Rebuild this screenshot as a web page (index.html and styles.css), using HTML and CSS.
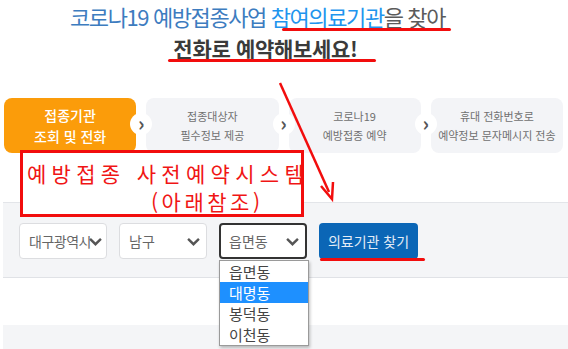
FILE: index.html
```html
<!DOCTYPE html>
<html lang="ko">
<head>
<meta charset="utf-8">
<link rel="stylesheet" href="styles.css">
</head>
<body>
<div class="page">
  <header class="intro">
    <p class="line1">코로나19 예방접종사업 <span class="hl">참여의료기관</span><span class="grey">을 찾아</span></p>
    <p class="line2">전화로 예약해보세요!</p>
  </header>

  <ol class="steps">
    <li class="step active"><span>접종기관</span><span>조회 및 전화</span></li>
    <li class="step"><span>접종대상자</span><span>필수정보 제공</span></li>
    <li class="step"><span>코로나19</span><span>예방접종 예약</span></li>
    <li class="step last"><span>휴대 전화번호로</span><span>예약정보 문자메시지 전송</span></li>
  </ol>

  <section class="filter">
    <div class="select"><span class="val">대구광역시</span><svg class="chev" viewBox="0 0 12 8"><path d="M1 1.5 L6 6.5 L11 1.5" /></svg></div>
    <div class="select"><span class="val">남구</span><svg class="chev" viewBox="0 0 12 8"><path d="M1 1.5 L6 6.5 L11 1.5" /></svg></div>
    <div class="select focus"><span class="val">읍면동</span><svg class="chev" viewBox="0 0 12 8"><path d="M1 1.5 L6 6.5 L11 1.5" /></svg>
      <ul class="dropdown">
        <li>읍면동</li>
        <li class="sel">대명동</li>
        <li>봉덕동</li>
        <li>이천동</li>
      </ul>
    </div>
    <button class="btn">의료기관 찾기</button>
  </section>

  <div class="blank"></div>
  <div class="footer-band"></div>

  <div class="note">
    <p>예방접종 사전예약시스템</p>
    <p class="sub">(아래참조)</p>
  </div>
  <span class="uline u1"></span>
  <span class="uline u2"></span>
  <span class="uline u3"></span>
  <svg class="arrow" viewBox="0 0 568 349">
    <line x1="280" y1="83" x2="329" y2="192" />
    <path d="M321 186 L332 199 L333 182" />
  </svg>
</div>
</body>
</html>
```

FILE: styles.css
```css
* { box-sizing: border-box; }
html, body { margin: 0; padding: 0; background: #fff; }
body {
  font-family: "Noto Sans CJK KR", "Noto Sans", sans-serif;
  width: 568px;
  height: 349px;
  overflow: hidden;
}
.page { position: relative; width: 568px; height: 349px; }

.intro { text-align: center; padding-top: 1px; }
.intro p { margin: 0; white-space: nowrap; }
.line1 {
  font-size: 22px;
  letter-spacing: -1.4px;
  line-height: 31px;
  color: #3d7cbf;
  padding-right: 53px;
}
.line1 .hl { color: #1f95ee; }
.line1 .grey { color: #5b5b5b; }
.line2 {
  font-size: 21px;
  font-weight: 700;
  letter-spacing: -0.3px;
  line-height: 32px;
  color: #3a3a3a;
  padding-right: 37px;
}

.steps {
  list-style: none;
  margin: 34px 0 0 0;
  padding: 0 5px 0 4px;
  display: flex;
  gap: 10px;
}
.step {
  position: relative;
  flex: 1;
  height: 55px;
  border-radius: 8px;
  background: #f3f4f7;
  color: #707070;
  font-size: 11px;
  line-height: 19px;
  display: flex;
  flex-direction: column;
  justify-content: center;
  align-items: center;
  padding-top: 1px;
}
.step.active {
  background: #fb9c0a;
  color: #fff;
  font-size: 14px;
  font-weight: 500;
  line-height: 21px;
}
.step::after {
  content: "›";
  position: absolute;
  right: -16px;
  top: 15px;
  width: 22px;
  height: 22px;
  border-radius: 50%;
  background: #fff;
  color: #555;
  font-size: 20px;
  font-weight: 700;
  line-height: 19px;
  text-align: center;
  z-index: 2;
}
.step.last::after { display: none; }

.filter {
  margin: 49px 0 0 3px;
  height: 76px;
  background: #f4f5f7;
  border-top: 1px solid #e3e5e9;
  border-bottom: 1px solid #e0e2e6;
  display: flex;
  align-items: flex-start;
  padding: 20px 0 0 16px;
  gap: 12px;
}
.select {
  position: relative;
  width: 88px;
  height: 36px;
  background: #fff;
  border: 1px solid #dcdde0;
  border-radius: 4px;
  display: flex;
  align-items: center;
  padding-left: 9px;
  font-size: 14px;
  color: #666;
}
.select .val { flex: 1; white-space: nowrap; overflow: hidden; }
.select:first-child .val { letter-spacing: -0.5px; }
.select .chev {
  width: 13px;
  height: 9px;
  margin-right: 6px;
  fill: none;
  stroke: #555;
  stroke-width: 2.2;
  flex-shrink: 0;
}
.select:first-child .chev { margin-left: -6px; margin-right: 4px; }
.select.focus {
  border: 2px solid #333;
  padding-left: 8px;
}
.btn {
  margin-left: 0;
  width: 99px;
  height: 36px;
  border: 0;
  border-radius: 4px;
  background: #0b66b6;
  color: #e3ecf6;
  font-family: inherit;
  font-size: 14px;
  padding: 0;
}

.dropdown {
  position: absolute;
  left: -2px;
  top: 35px;
  width: 90px;
  margin: 0;
  padding: 0;
  list-style: none;
  background: #fff;
  border: 1px solid #9a9a9a;
  box-shadow: 1px 2px 3px rgba(0,0,0,0.25);
  z-index: 5;
}
.dropdown li {
  height: 21px;
  line-height: 21px;
  font-size: 15px;
  color: #444;
  padding-left: 9px;
}
.dropdown li.sel { background: #1e90ff; color: #fff; }

.blank { height: 47px; }
.footer-band { margin-left: 3px; height: 30px; background: #f4f5f7; }

.note {
  position: absolute;
  left: 20px;
  top: 150px;
  width: 284px;
  height: 67px;
  border: 3px solid #f20d0d;
  background: #fff;
  color: #f01515;
  font-size: 21px;
  letter-spacing: 5.3px;
  line-height: 28px;
  padding: 6px 0 0 4px;
  z-index: 3;
}
.note p { margin: 0; white-space: nowrap; }
.note .sub { padding-left: 124px; letter-spacing: 3.5px; }

.uline {
  position: absolute;
  height: 3px;
  background: #f20d0d;
  border-radius: 2px;
  z-index: 4;
}
.u1 { left: 282px; top: 28px; width: 169px; }
.u2 { left: 168px; top: 59px; width: 208px; }
.u3 { left: 320px; top: 258px; width: 105px; }

.arrow {
  position: absolute;
  left: 0;
  top: 0;
  width: 568px;
  height: 349px;
  pointer-events: none;
  z-index: 6;
  fill: none;
  stroke: #f20d0d;
  stroke-width: 2.5;
}
```
